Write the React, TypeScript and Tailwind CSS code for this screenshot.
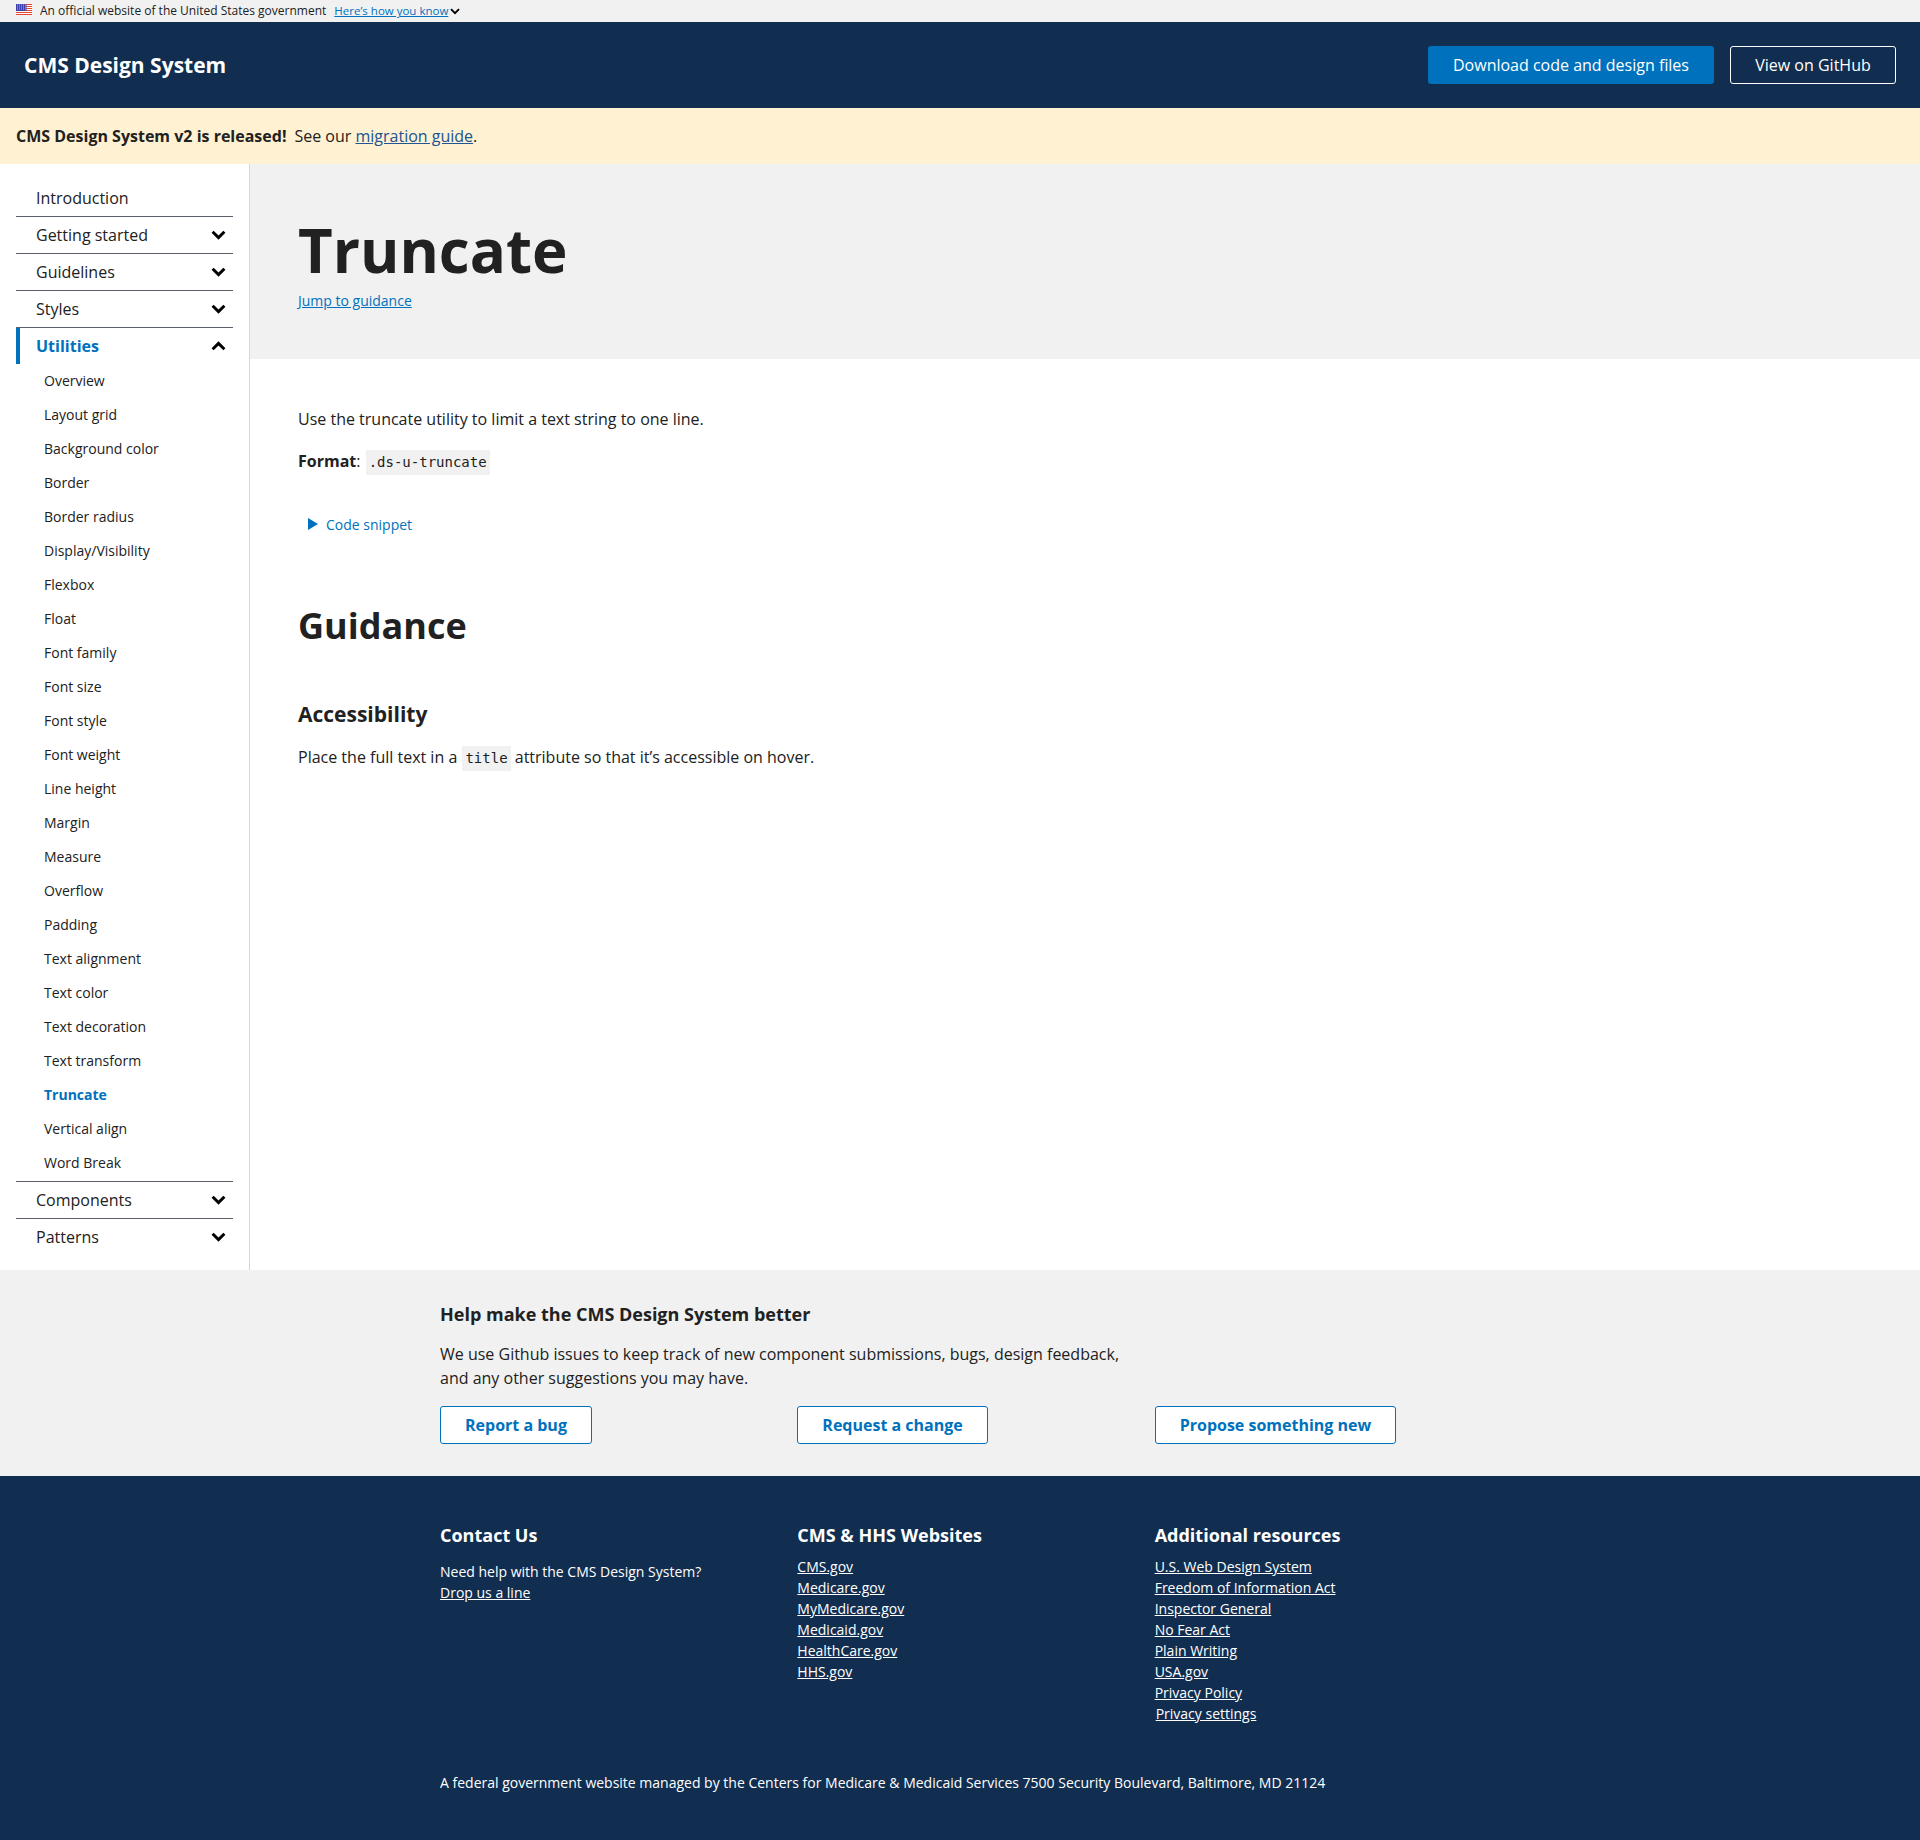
import React from "react";

const Chevron = ({ up = false }: { up?: boolean }) => (
  <svg width="15" height="10" viewBox="0 0 15 10" className={up ? "rotate-180" : ""}>
    <path d="M1.6 1.8 7.5 7.6l5.9-5.8" fill="none" stroke="#000" strokeWidth="3" />
  </svg>
);

const Flag = () => (
  <svg width="16" height="11" viewBox="0 0 16 11" className="-mt-[3px] shrink-0">
    <rect width="16" height="11" fill="#fff" />
    {[0, 2, 4, 6, 8, 10].map((y) => (
      <rect key={y} y={y} width="16" height="1" fill="#e8432f" />
    ))}
    <rect width="10.5" height="7" fill="#3c3fa8" />
    {[1.5, 3.5, 5.5, 7.5, 9.5].map((x) =>
      [1, 3, 5].map((y) => <rect key={`${x}-${y}`} x={x - 0.4} y={y - 0.4} width="0.8" height="0.8" fill="#fff" />)
    )}
  </svg>
);

const topBefore = ["Getting started", "Guidelines", "Styles"];
const children = [
  "Overview", "Layout grid", "Background color", "Border", "Border radius", "Display/Visibility", "Flexbox", "Float",
  "Font family", "Font size", "Font style", "Font weight", "Line height", "Margin", "Measure", "Overflow", "Padding",
  "Text alignment", "Text color", "Text decoration", "Text transform", "Truncate", "Vertical align", "Word Break",
];

const NavRow = ({ label, chevron = true }: { label: string; chevron?: boolean }) => (
  <div className="flex h-[37px] items-center justify-between border-b border-[#5b616b] pl-5 pr-[7px] text-[16px] text-[#212121] last:border-b-0 last:pb-px">
    <span>{label}</span>
    {chevron && <Chevron />}
  </div>
);

const cols = [
  ["CMS.gov", "Medicare.gov", "MyMedicare.gov", "Medicaid.gov", "HealthCare.gov", "HHS.gov"],
  ["U.S. Web Design System", "Freedom of Information Act", "Inspector General", "No Fear Act", "Plain Writing", "USA.gov", "Privacy Policy"],
];

const HelpBtn = ({ children: c }: { children: React.ReactNode }) => (
  <a className="inline-flex h-[38px] items-center rounded-[3px] border border-[#0071bc] bg-white px-6 text-[16px] font-bold text-[#0071bc]">{c}</a>
);

export default function App() {
  return (
    <div className="flex min-h-[1840px] flex-col bg-white font-['Open_Sans',sans-serif] text-[#212121]">
      <div className="flex h-[22px] items-center bg-[#f1f1f1] pl-4 text-[12px]">
        <Flag />
        <span className="ml-2">An official website of the United States government</span>
        <a className="ml-2 text-[11.5px] text-[#0071bc] underline">Here’s how you know</a>
        <svg width="10" height="7" viewBox="0 0 10 7" className="ml-0.5">
          <path d="M1 1.2l4 4 4-4" fill="none" stroke="#000" strokeWidth="1.9" />
        </svg>
      </div>
      <header className="flex h-[86px] items-center justify-between bg-[#112e51] pl-6 pr-6 text-white">
        <div className="pt-[2px] text-[21px] font-bold">CMS Design System</div>
        <div className="flex gap-4">
          <a className="flex h-[38px] w-[286px] items-center justify-center rounded-[3px] bg-[#0071bc] text-[16px]">Download code and design files</a>
          <a className="flex h-[38px] w-[166px] items-center justify-center rounded-[3px] border border-white text-[16px]">View on GitHub</a>
        </div>
      </header>
      <div className="flex h-[56px] items-center bg-[#fff1d2] pl-4 text-[16px]">
        <b className="font-bold">CMS Design System v2 is released!</b>
        <span className="ml-2">
          See our <a className="text-[#205493] underline">migration guide</a>.
        </span>
      </div>
      <div className="flex h-[1106px]">
        <aside className="w-[250px] shrink-0 border-r border-[#d6d7d9] pl-4 pr-4 pt-[16px]">
          <NavRow label="Introduction" chevron={false} />
          {topBefore.map((l) => (
            <NavRow key={l} label={l} />
          ))}
          <div className="flex h-[36px] items-center justify-between border-l-4 border-[#0071bc] pl-4 pr-[7px] text-[16px] font-bold text-[#0071bc]">
            <span>Utilities</span>
            <Chevron up />
          </div>
          <ul className="border-b border-[#5b616b] pb-px">
            {children.map((c) => (
              <li key={c} className={`-mt-px flex h-[35px] items-center pl-7 pb-px text-[14px] ${c === "Truncate" ? "font-bold text-[#0071bc]" : ""}`}>
                {c}
              </li>
            ))}
          </ul>
          <NavRow label="Components" />
          <NavRow label="Patterns" />
        </aside>
        <main className="flex-1">
          <div className="h-[195px] bg-[#f1f1f1] pl-12 pt-[45px]">
            <h1 className="text-[60px] font-bold leading-[82px]">Truncate</h1>
            <a className="block text-[14px] leading-[19px] text-[#0071bc] underline">Jump to guidance</a>
          </div>
          <div className="pl-12">
            <p className="mt-[48px] text-[16px] leading-[24px]">Use the truncate utility to limit a text string to one line.</p>
            <p className="mt-[18px] text-[16px] leading-[24px]">
              <b className="font-bold">Format</b>:{" "}
              <code className="ml-px bg-[#f1f1f1] px-[3px] pt-[4px] pb-[5px] font-['DejaVu_Sans_Mono',monospace] text-[14px]">.ds-u-truncate</code>
            </p>
            <div className="mt-[38px] flex h-[24px] items-center pl-[10px] text-[14px] text-[#0071bc]">
              <svg width="10" height="12" viewBox="0 0 10 12" className="mr-[8px]">
                <path d="M0 0 10 6 0 12z" fill="#0071bc" />
              </svg>
              Code snippet
            </div>
            <h2 className="mt-[65px] text-[36px] font-bold leading-[50px]">Guidance</h2>
            <h3 className="mt-[49px] text-[21px] font-bold leading-[28px]">Accessibility</h3>
            <p className="mt-[17px] text-[16px] leading-[24px]">
              Place the full text in a{" "}
              <code className="ml-px bg-[#f1f1f1] px-[3px] pt-[4px] pb-[5px] font-['DejaVu_Sans_Mono',monospace] text-[14px]">title</code> attribute so that it’s accessible on hover.
            </p>
          </div>
        </main>
      </div>
      <section className="h-[206px] bg-[#f1f1f1] pl-[440px] pt-[31px]">
        <h4 className="text-[18px] font-bold leading-[26px]">Help make the CMS Design System better</h4>
        <p className="mt-[15px] w-[700px] text-[16px] leading-[24px]">
          We use Github issues to keep track of new component submissions, bugs, design feedback, and any other suggestions you may have.
        </p>
        <div className="mt-[16px] grid w-[1072px] grid-cols-3">
          <div><HelpBtn>Report a bug</HelpBtn></div>
          <div><HelpBtn>Request a change</HelpBtn></div>
          <div><HelpBtn>Propose something new</HelpBtn></div>
        </div>
      </section>
      <footer className="flex-1 bg-[#112e51] pl-[440px] pt-[46px] text-[14px] text-white">
        <div className="grid h-[250px] w-[1072px] grid-cols-3">
          <div>
            <h5 className="text-[18px] font-bold leading-[26px]">Contact Us</h5>
            <p className="mt-[13px] leading-[21px]">Need help with the CMS Design System?</p>
            <a className="block underline leading-[21px]">Drop us a line</a>
          </div>
          <div>
            <h5 className="text-[18px] font-bold leading-[26px]">CMS &amp; HHS Websites</h5>
            <ul className="mt-[8px]">
              {cols[0].map((l) => (
                <li key={l} className="leading-[21px] underline">{l}</li>
              ))}
            </ul>
          </div>
          <div>
            <h5 className="text-[18px] font-bold leading-[26px]">Additional resources</h5>
            <ul className="mt-[8px]">
              {cols[1].map((l) => (
                <li key={l} className="leading-[21px] underline">{l}</li>
              ))}
              <li className="pl-px leading-[21px] underline">Privacy settings</li>
            </ul>
          </div>
        </div>
        <p className="leading-[21px]">A federal government website managed by the Centers for Medicare &amp; Medicaid Services 7500 Security Boulevard, Baltimore, MD 21124</p>
      </footer>
    </div>
  );
}
